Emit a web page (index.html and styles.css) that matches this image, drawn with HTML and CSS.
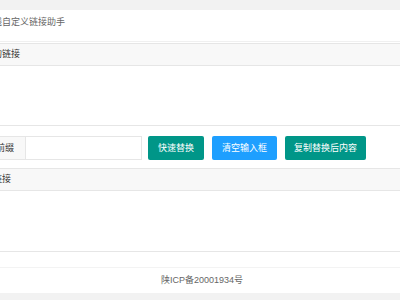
FILE: index.html
```html
<!DOCTYPE html>
<html lang="zh-CN">
<head>
<meta charset="utf-8">
<title>在线自定义链接助手</title>
<link rel="stylesheet" href="styles.css">
</head>
<body>
<div class="page">
  <div class="card">
    <div class="card-title">在线自定义链接助手</div>
    <div class="panel">
      <div class="panel-head">替换前的链接</div>
      <div class="area"></div>
      <div class="tools">
        <div class="field"><span class="label">链接前缀</span><span class="input"></span></div>
        <button class="btn teal first">快速替换</button>
        <button class="btn blue">清空输入框</button>
        <button class="btn teal last">复制替换后内容</button>
      </div>
      <div class="panel-head">替换后链接</div>
      <div class="area end"></div>
    </div>
    <div class="spacer"></div>
  </div>
  <div class="footer">陕ICP备20001934号</div>
</div>
</body>
</html>
```

FILE: styles.css
```css
html, body {
  margin: 0;
  padding: 0;
  overflow: hidden;
  background: #f2f2f2;
}
body {
  font-family: "Liberation Sans", "Noto Sans CJK SC", sans-serif;
  font-size: 9px;
  color: #333;
}
.page {
  margin-left: -38px;
  width: 480px;
  padding-top: 10px;
}
.card {
  background: #fff;
}
.card-title {
  height: 25px;
  line-height: 25px;
  padding: 0 0 6px 22px;
  color: #666;
  border-bottom: 1px solid #f0f0f0;
  margin-bottom: 1px;
}
.panel {
  border-top: 1px solid #e6e6e6;
}
.panel-head {
  height: 21px;
  line-height: 21px;
  padding-left: 4px;
  background: #f8f8f8;
  border-bottom: 1px solid #e6e6e6;
  color: #333;
}
.area {
  height: 59px;
  border-bottom: 1px solid #e6e6e6;
}
.area.end {
  height: 60px;
}
.tools {
  display: flex;
  align-items: center;
  padding: 10px 0 8px 4px;
  border-bottom: 1px solid #e6e6e6;
}
.field {
  display: flex;
  height: 22px;
  border: 1px solid #e6e6e6;
}
.label {
  width: 58px;
  text-align: center;
  line-height: 22px;
  background: #f8f8f8;
  border-right: 1px solid #e6e6e6;
  color: #333;
}
.input {
  width: 115px;
  background: #fff;
}
.btn {
  height: 24px;
  padding: 0 10px;
  margin-left: 8px;
  border: 0;
  border-radius: 2px;
  color: #fff;
  font: inherit;
  line-height: 24px;
}
.btn.first {
  margin-left: 6px;
}
.btn.last {
  padding: 0 9px;
}
.teal {
  background: #009688;
}
.blue {
  background: #1e9fff;
}
.spacer {
  height: 15px;
  border-bottom: 1px solid #f3f3f3;
}
.footer {
  height: 25px;
  line-height: 25px;
  text-align: center;
  background: #fff;
  color: #666;
}
```
